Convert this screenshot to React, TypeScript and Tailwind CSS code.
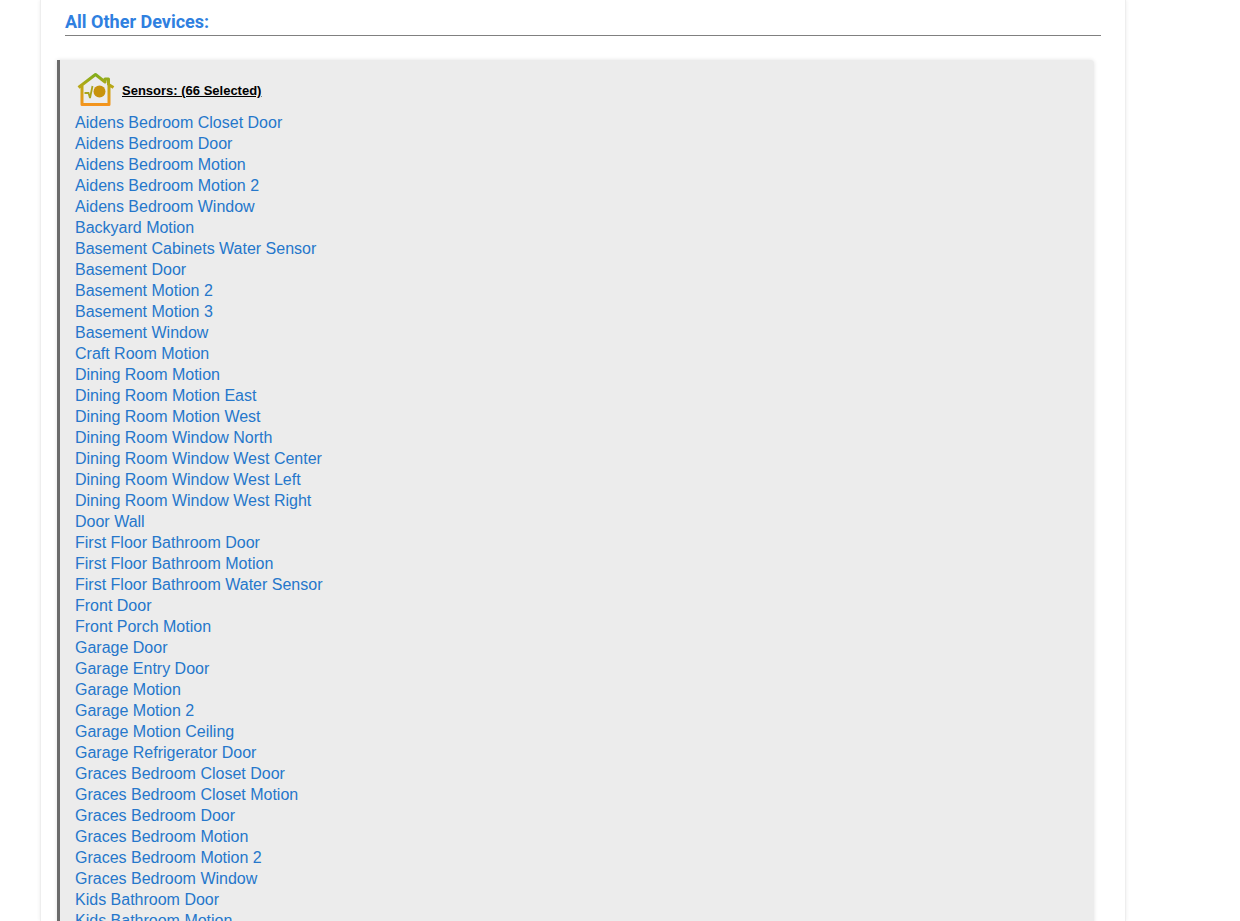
import React from 'react';

const sensors = [
  'Aidens Bedroom Closet Door',
  'Aidens Bedroom Door',
  'Aidens Bedroom Motion',
  'Aidens Bedroom Motion 2',
  'Aidens Bedroom Window',
  'Backyard Motion',
  'Basement Cabinets Water Sensor',
  'Basement Door',
  'Basement Motion 2',
  'Basement Motion 3',
  'Basement Window',
  'Craft Room Motion',
  'Dining Room Motion',
  'Dining Room Motion East',
  'Dining Room Motion West',
  'Dining Room Window North',
  'Dining Room Window West Center',
  'Dining Room Window West Left',
  'Dining Room Window West Right',
  'Door Wall',
  'First Floor Bathroom Door',
  'First Floor Bathroom Motion',
  'First Floor Bathroom Water Sensor',
  'Front Door',
  'Front Porch Motion',
  'Garage Door',
  'Garage Entry Door',
  'Garage Motion',
  'Garage Motion 2',
  'Garage Motion Ceiling',
  'Garage Refrigerator Door',
  'Graces Bedroom Closet Door',
  'Graces Bedroom Closet Motion',
  'Graces Bedroom Door',
  'Graces Bedroom Motion',
  'Graces Bedroom Motion 2',
  'Graces Bedroom Window',
  'Kids Bathroom Door',
  'Kids Bathroom Motion',
];

const HouseIcon = () => (
  <svg width="38" height="36" viewBox="0 0 38 36" fill="none">
    <defs>
      <linearGradient id="house" gradientUnits="userSpaceOnUse" x1="0" y1="2" x2="0" y2="34">
        <stop offset="0" stopColor="#7fae1c" />
        <stop offset="0.5" stopColor="#c9a516" />
        <stop offset="1" stopColor="#f7931e" />
      </linearGradient>
    </defs>
    <path
      d="M1.500 15.500 L18.500 2.500 L28 10 V7 H31.500 V12.500 L36.500 15.500 M5 13 V32.500 H32 V13"
      stroke="url(#house)"
      strokeWidth="3"
      strokeLinejoin="round"
    />
    <circle cx="22.500" cy="19.500" r="6" fill="#c8930c" />
    <path d="M7.500 21 H11.500 L13 26 L15.500 14" stroke="#a8a41a" strokeWidth="1.800" />
  </svg>
);

export default function App() {
  return (
    <div className="h-[921px] overflow-hidden bg-white">
      <div className="ml-[40px] w-[1086px] h-full bg-white border-x border-[#eeeeee] shadow-[0_0_4px_rgba(0,0,0,0.08)] relative">
        <div className="pl-[24px] pr-[24px] pt-[9px]">
          <h2 className="font-['Roboto',sans-serif] font-bold text-[18px] leading-[25px] text-[#2f80e0] border-b border-[#808080] h-[27px]">
            All Other Devices:
          </h2>
        </div>
        <div className="ml-[16px] mt-[24px] w-[1037px] bg-[#ececec] border-l-[3px] border-[#6b6b6b] rounded-r-[4px] shadow-[0_0_4px_rgba(0,0,0,0.12)] pl-[15px] pt-[12px] pb-[40px] font-['Liberation_Sans',Arial,sans-serif]">
          <div className="flex items-center h-[36px] mb-[4px]">
            <span className="ml-[2px] mr-[7px] flex">
              <HouseIcon />
            </span>
            <span className="mt-[2px] text-[13px] font-bold text-black underline">Sensors: (66 Selected)</span>
          </div>
          <div className="flex flex-col items-start">
            {sensors.map((name) => (
              <a key={name} className="text-[16px] leading-[21px] text-[#2577cb]">
                {name}
              </a>
            ))}
          </div>
        </div>
      </div>
    </div>
  );
}
